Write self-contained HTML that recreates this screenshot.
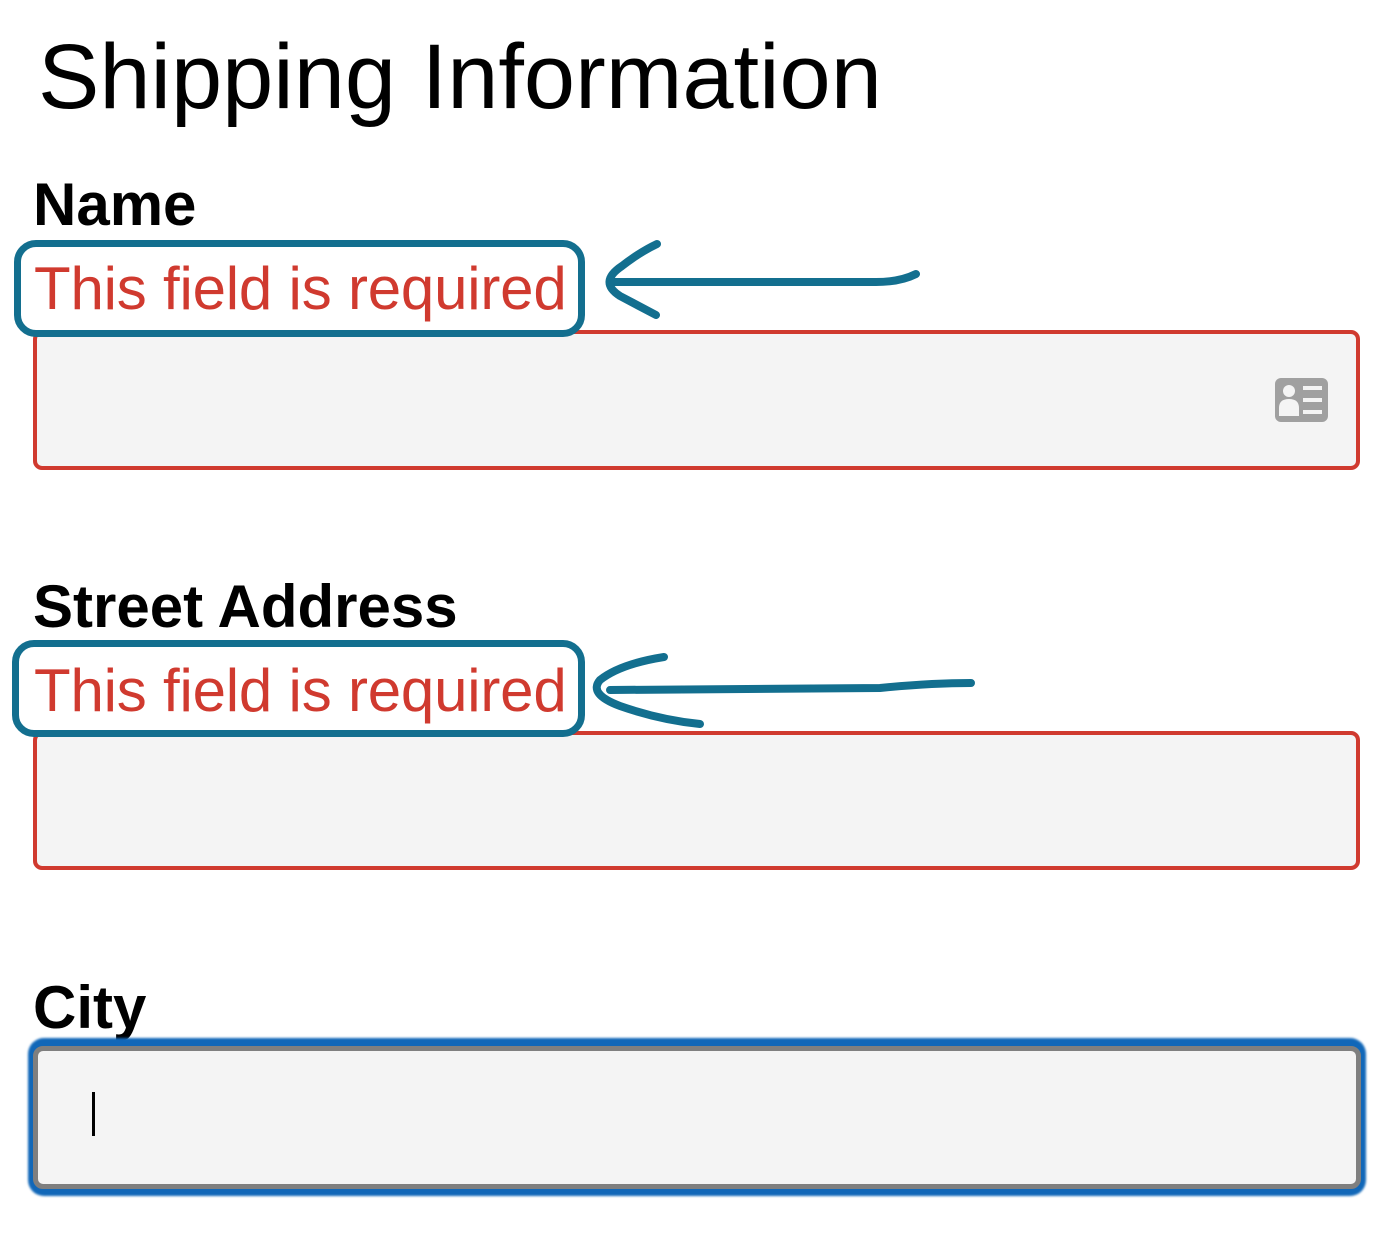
<!DOCTYPE html>
<html><head><meta charset="utf-8"><style>
body{margin:0;width:1394px;height:1248px;background:#fff;position:relative;overflow:hidden;font-family:"Liberation Sans",Arial,sans-serif}
.a{position:absolute;white-space:nowrap}
.t{left:38px;top:22px;font-size:92px;line-height:110px;color:#000}
.l{font-size:60px;font-weight:bold;line-height:70px;color:#000;left:33px}
.e{font-size:60px;line-height:70px;color:#d03a2f;left:34px;letter-spacing:-0.2px}
.box{position:absolute;border:7px solid #136f8f;border-radius:22px;box-sizing:border-box}
.in{position:absolute;left:33px;width:1327px;background:#f4f4f4;border:4px solid #d03a2f;border-radius:9px;box-sizing:border-box}
</style></head><body>
<div class="a t">Shipping Information</div>

<div class="a l" style="top:170px">Name</div>
<div class="in" style="top:330px;height:140px"></div>
<div class="a e" style="top:254px">This field is required</div>
<div class="box" style="left:14px;top:240px;width:571px;height:97px"></div>
<svg class="a" style="left:1272px;top:376px" width="58" height="48" viewBox="0 0 58 48">
<rect x="3" y="2" width="53" height="44" rx="6" fill="#a0a0a0"/>
<circle cx="17" cy="15" r="6" fill="#f4f4f4"/>
<path d="M7 40 v-8 q0-9 10-9 q10 0 10 9 v8z" fill="#f4f4f4"/>
<rect x="31" y="10" width="19" height="4" fill="#f4f4f4"/>
<rect x="31" y="22" width="19" height="4" fill="#f4f4f4"/>
<rect x="31" y="34" width="19" height="4" fill="#f4f4f4"/>
</svg>

<div class="a l" style="top:572px">Street Address</div>
<div class="in" style="top:731px;height:139px"></div>
<div class="a e" style="top:656px">This field is required</div>
<div class="box" style="left:12px;top:640px;width:573px;height:97px"></div>

<svg class="a" style="left:0;top:0" width="1394" height="1248">
<g fill="none" stroke="#136f8f" stroke-width="8" stroke-linecap="round" stroke-linejoin="round">
<path d="M916 274 Q900 282 876 282 L612 282"/>
<path d="M657 244 Q640 252 622 266 Q598 282 620 296 L656 315"/>
<path d="M971 683 Q930 683 880 688 L610 690"/>
<path d="M664 657 Q620 664 600 680 Q588 694 620 706 Q660 720 700 724"/>
</g>
</svg>

<div class="a l" style="top:973px">City</div>
<div class="a" style="left:28px;top:1038px;width:1338px;height:158px;border-radius:16px;background:#1167b8;filter:blur(1px)"></div>
<div class="a" style="left:33px;top:1046px;width:1328px;height:143px;box-sizing:border-box;border:5px solid #7f7f7f;border-radius:10px;background:#f4f4f4"></div>
<div class="a" style="left:92px;top:1092px;width:3px;height:44px;background:#000"></div>
</body></html>
